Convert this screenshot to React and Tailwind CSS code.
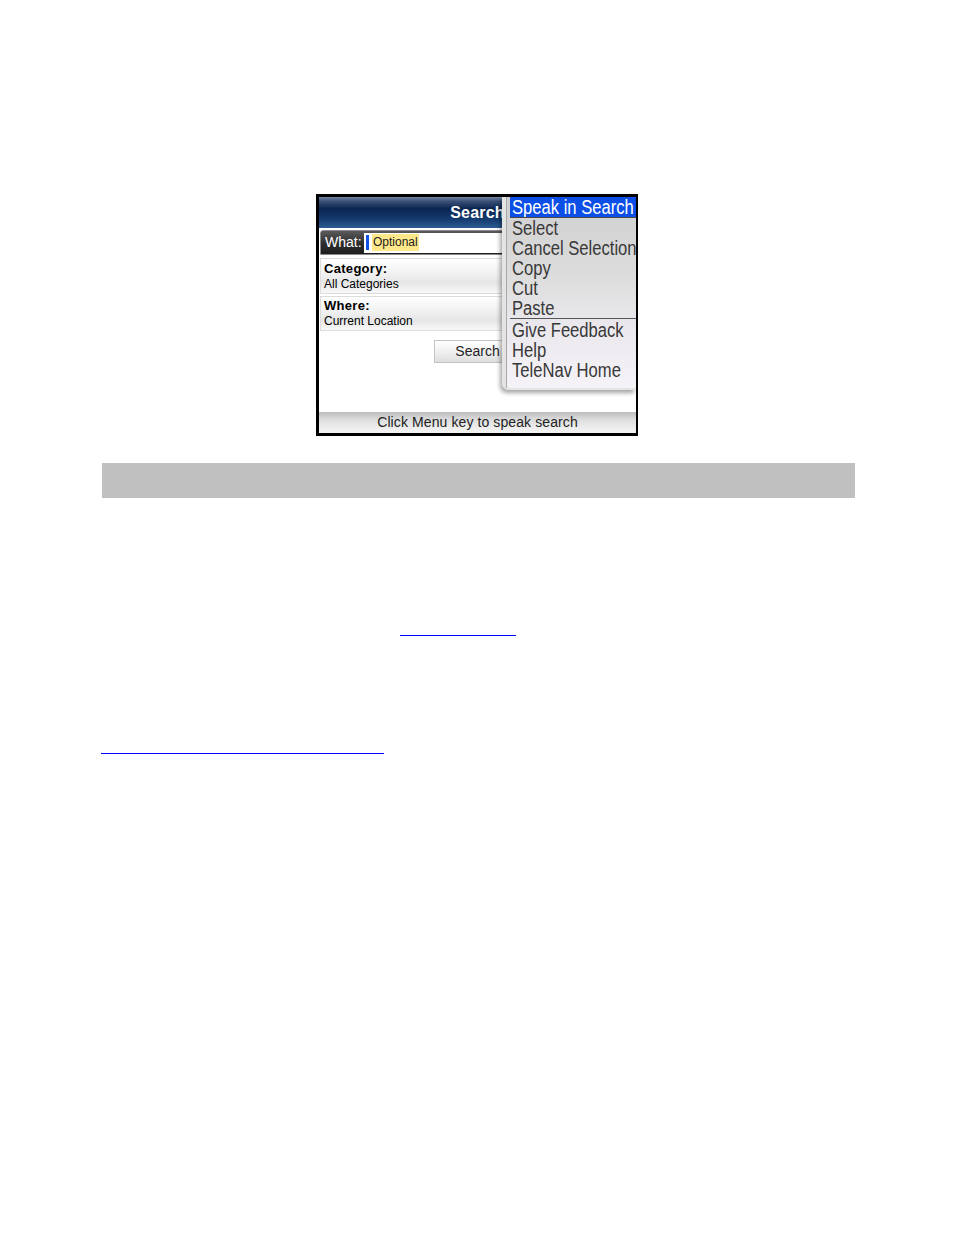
export default function App() {
  const menuTop = ['Select', 'Cancel Selection', 'Copy', 'Cut', 'Paste'];
  const menuBottom = ['Give Feedback', 'Help', 'TeleNav Home'];

  return (
    <div className="w-[954px] min-h-[1235px] bg-white font-['Liberation_Sans',Arial,sans-serif] flex flex-col">
      {/* phone screenshot */}
      <div className="mt-[194px] self-center w-[322px] h-[242px] border-[3px] border-r-2 border-black bg-white">
        <div className="relative w-full h-full flex flex-col overflow-hidden">
          {/* title bar */}
          <div className="h-[31px] flex items-center justify-center bg-[linear-gradient(to_bottom,#7284a0_0%,#3b5078_14%,#0a2550_38%,#143a6e_70%,#2a5c92_100%)] text-white font-bold text-[16px] tracking-[0.2px]">
            Search
          </div>

          {/* what row */}
          <div className="mt-[2px] mx-px h-[25px] rounded-tl-[3px] flex items-center bg-[linear-gradient(to_bottom,#5a5a5a,#2e2e2e_55%,#1e1e1e)] border border-[#8a8a8a]">
            <span className="pl-[4px] text-white text-[14px] w-[43px]">What:</span>
            <div className="flex-1 h-[20px] bg-white flex items-center pl-[2px]">
              <span className="w-[3px] h-[15px] bg-[#1452e6]"></span>
              <span className="ml-[3px] bg-[#ffe88a] text-[#222] text-[12px] leading-[17px] px-px">Optional</span>
            </div>
          </div>

          {/* category */}
          <div className="mt-[3px] mx-px h-[36px] px-[3px] flex flex-col justify-center border border-[#dcdcdc] bg-[linear-gradient(to_bottom,#ffffff,#f2f2f2_40%,#e6e6e6_70%,#f8f8f8)]">
            <span className="text-[13px] font-bold text-black leading-[16px] tracking-[0.3px]">Category:</span>
            <span className="text-[12px] text-black leading-[15px]">All Categories</span>
          </div>

          {/* where */}
          <div className="mt-[2px] mx-px h-[35px] px-[3px] flex flex-col justify-center border border-[#dcdcdc] bg-[linear-gradient(to_bottom,#ffffff,#f2f2f2_40%,#e6e6e6_70%,#f8f8f8)]">
            <span className="text-[13px] font-bold text-black leading-[16px] tracking-[0.3px]">Where:</span>
            <span className="text-[12px] text-black leading-[15px]">Current Location</span>
          </div>

          {/* search button */}
          <div className="mt-[9px] self-center w-[88px] h-[23px] flex items-center justify-center border border-[#c4c4c4] bg-[linear-gradient(to_bottom,#ffffff,#f0f0f0_50%,#dedede)] text-[14px] text-[#222]">
            Search
          </div>

          <div className="flex-1"></div>

          {/* status bar */}
          <div className="h-[21px] flex items-center justify-center bg-[linear-gradient(to_bottom,#bdbdbd,#dcdcdc_35%,#ececec_70%,#f4f4f4)] text-[14px] text-[#222] tracking-[0.1px]">
            Click Menu key to speak search
          </div>

          {/* context menu */}
          <div className="absolute left-[183px] top-0 right-0 h-[193px] rounded-bl-[7px] border-l-[4px] border-b-[2px] border-[#e4e4e4] shadow-[-2px_3px_4px_rgba(0,0,0,0.35)] bg-[linear-gradient(to_bottom,#cfcfcf,#dcdcdc_40%,#ebe9ee_70%,#f5f3f7)]">
            <div className="h-full border-l border-[#a8a8a8] pl-[3px] flex flex-col">
              <div className="h-[20px] bg-[#0c4fe6] pl-[2px] whitespace-nowrap overflow-hidden">
                <span className="inline-block origin-left scale-x-[0.83] text-white text-[20px] leading-[19px]">Speak in Search</span>
              </div>
              <div className="h-px bg-[#4a4a4a]"></div>
              {menuTop.map((item) => (
                <div key={item} className="h-[20px] pl-[2px] whitespace-nowrap">
                  <span className="inline-block origin-left scale-x-[0.83] text-[#383838] text-[20px] leading-[19px]">{item}</span>
                </div>
              ))}
              <div className="h-px bg-[#555]"></div>
              <div className="h-px"></div>
              {menuBottom.map((item) => (
                <div key={item} className="h-[20px] pl-[2px] whitespace-nowrap">
                  <span className="inline-block origin-left scale-x-[0.83] text-[#383838] text-[20px] leading-[19px]">{item}</span>
                </div>
              ))}
            </div>
          </div>
        </div>
      </div>

      {/* caption bar */}
      <div className="mt-[27px] ml-[102px] w-[753px] h-[35px] bg-[#c0c0c0]"></div>

      {/* link underlines */}
      <div className="mt-[137px] ml-[400px] w-[116px] h-px bg-[#0000ff]"></div>
      <div className="mt-[117px] ml-[101px] w-[283px] h-px bg-[#0000ff]"></div>
    </div>
  );
}
